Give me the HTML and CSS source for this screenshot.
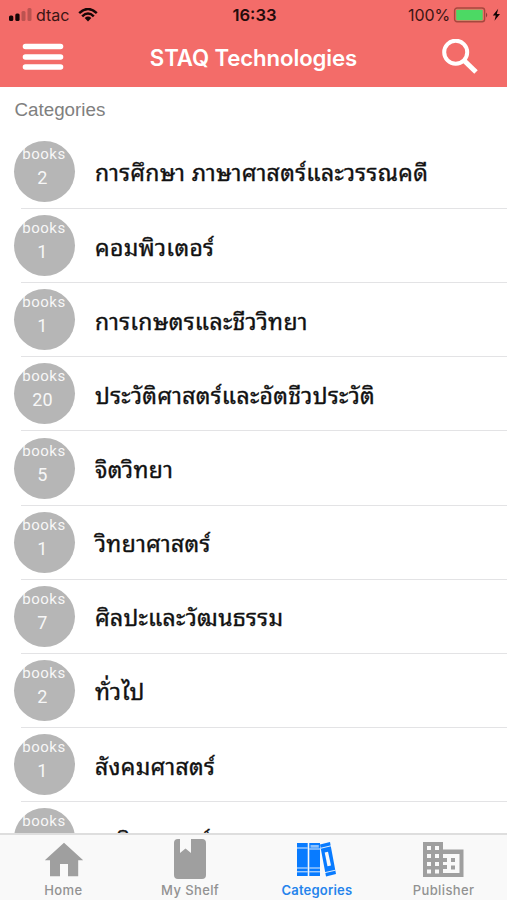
FILE: index.html
```html
<!DOCTYPE html>
<html lang="th">
<head>
<meta charset="utf-8">
<title>STAQ Technologies</title>
<link rel="stylesheet" href="styles.css">
</head>
<body>
<div class="app">
  <header class="header">
    <div class="status">
      <div class="carrier">
        <svg class="signal" width="24" height="14" viewBox="0 0 24 14"><rect x="0" y="7.5" width="4.3" height="5.5" rx="1.5"/><rect x="6.3" y="5.5" width="4.3" height="7.5" rx="1.5"/><rect x="12.5" y="3" width="4" height="10" rx="1.5" opacity=".25"/><rect x="18.5" y="0" width="4" height="13" rx="1.5" opacity=".25"/></svg>
        <span>dtac</span>
        <svg class="wifi" width="20" height="14" viewBox="0 0 20 14"><path d="M1.2 5.1Q10-3 18.8 5.1M4.2 8.3Q10 2.8 15.8 8.3" fill="none" stroke="#170606" stroke-width="2.5"/><path d="M6.7 10Q10 7.2 13.3 10L10 13.4Z"/></svg>
      </div>
      <time class="clock">16:33</time>
      <div class="power">
        <span>100%</span>
        <svg width="47" height="16" viewBox="0 0 47 16"><rect x="1.6" y="1" width="30" height="13.8" rx="2.5" fill="none" stroke="#a5483e" stroke-width="1.4"/><rect x="3.2" y="2.8" width="26.5" height="10.4" rx="1" fill="#4cd964"/><path d="M33 5.5Q35.5 8 33 10.5Z" fill="#8d3e39"/><path d="M45.2 1.8L39.8 8.5H42.8L41.5 13.8L47 7H43.8Z" fill="#120404"/></svg>
      </div>
    </div>
    <nav class="navbar">
      <svg width="42" height="28" viewBox="0 0 42 28"><path d="M3.5 3.5H38.5M3.5 14H38.5M3.5 24H38.5" stroke="#fff" stroke-width="5.6" stroke-linecap="round"/></svg>
      <h1>STAQ Technologies</h1>
      <svg width="36" height="36" viewBox="0 0 36 36"><circle cx="13.7" cy="13.2" r="11.5" fill="none" stroke="#fff" stroke-width="4"/><path d="M22.3 21.8L34 33" stroke="#fff" stroke-width="5"/></svg>
    </nav>
  </header>
  <main class="content">
    <h2>Categories</h2>
    <ul class="list">
      <li><div class="badge"><span>books</span><b>2</b></div><p class="name">การศึกษา ภาษาศาสตร์และวรรณคดี</p></li>
      <li><div class="badge"><span>books</span><b>1</b></div><p class="name">คอมพิวเตอร์</p></li>
      <li><div class="badge"><span>books</span><b>1</b></div><p class="name">การเกษตรและชีววิทยา</p></li>
      <li><div class="badge"><span>books</span><b>20</b></div><p class="name">ประวัติศาสตร์และอัตชีวประวัติ</p></li>
      <li><div class="badge"><span>books</span><b>5</b></div><p class="name">จิตวิทยา</p></li>
      <li><div class="badge"><span>books</span><b>1</b></div><p class="name">วิทยาศาสตร์</p></li>
      <li><div class="badge"><span>books</span><b>7</b></div><p class="name">ศิลปะและวัฒนธรรม</p></li>
      <li><div class="badge"><span>books</span><b>2</b></div><p class="name">ทั่วไป</p></li>
      <li><div class="badge"><span>books</span><b>1</b></div><p class="name">สังคมศาสตร์</p></li>
      <li class="last"><div class="badge"><span>books</span></div><p class="name">คณิตศาสตร์</p></li>
    </ul>
  </main>
  <footer class="tabs">
    <div class="tab home"><svg width="40" height="44" viewBox="0 0 40 44"><path d="M20 8.7L39.2 26.2H34.2V42.3H24V30H16V42.3H6V26.2H.8Z"/></svg><span>Home</span></div>
    <div class="tab"><svg width="40" height="44" viewBox="0 0 40 44"><path d="M8 5H10V19L15.5 14.5L21 19V5H32Q36 5 36 9V41Q36 45 32 45H8Q4 45 4 41V9Q4 5 8 5Z"/></svg><span>My Shelf</span></div>
    <div class="tab active"><svg width="40" height="44" viewBox="0 0 40 44"><path d="M1 9H11.7V42H1ZM13.3 9H24V42H13.3ZM24 10.5L34 8L40 40L30 42.4Z"/><path d="M1 14H11.7M1 34H11.7M1 37.8H11.7M13.3 15H24M13.3 34H24M13.3 37.8H24M25 14.2L35 11.8M29 38.6L39.5 36.2" stroke="#f9f9f9" stroke-width=".9"/><path d="M14.5 11H22.8V13.7H14.5Z" fill="#8fc2fb"/><path d="M28.7 18.5L32 17.7L35 31.5L31.5 32.3Z" fill="#f9f9f9"/></svg><span>Categories</span></div>
    <div class="tab publisher"><svg width="42" height="44" viewBox="0 0 42 44"><path fill-rule="evenodd" d="M1 8H21V15.5H41.5V43H1ZM5 12V16H9V12ZM13 12V16H17V12ZM5 20V24H9V20ZM13 20V24H17V20ZM5 28V32H9V28ZM13 28V32H17V28ZM5 35.5V39.5H9V35.5ZM13 35.5V39.5H17V35.5ZM21 20V24H25V28H21V31H25V35H21V39H37.5V20Z"/><path d="M29 24H33V28H29ZM29 31.5H33V35.5H29Z"/></svg><span>Publisher</span></div>
  </footer>
</div>
</body>
</html>
```
FILE: styles.css
```css
* { box-sizing: border-box; }
body, h1, h2, p, ul { margin: 0; padding: 0; }
body { background: #fff; font-family: Inter, "Liberation Sans", sans-serif; }
svg { display: block; flex: none; }
.app { height: 900px; display: flex; flex-direction: column; overflow: hidden; }
.header { height: 87px; flex: none; background: #f36c69; }
.status { height: 30px; display: grid; grid-template-columns: 1fr auto 1fr; padding: 0 7px 0 9px; font-size: 16px; line-height: 30px; color: #3b1514; }
.carrier, .power { display: flex; align-items: center; }
.carrier svg { fill: #170606; }
.carrier span { margin-left: 3px; letter-spacing: 0; }
.wifi { margin-left: 9px; }
.clock { font-weight: 600; color: #240b0b; font-size: 16.6px; }
.power { justify-content: flex-end; gap: 3px; }
.power span { font-size: 16px; letter-spacing: -.1px; }
.navbar { height: 57px; display: grid; grid-template-columns: 42px 1fr 36px; align-items: center; padding: 0 29px 3px 22px; color: #fff; }
.navbar h1 { text-align: center; font-size: 22.2px; font-weight: 600; letter-spacing: -.1px; padding: 1px 0 0 1px; }
.content { height: 746px; flex: none; overflow: hidden; }
.content h2 { height: 47.8px; padding-left: 14.5px; font: 400 18.8px/46px "Liberation Sans", sans-serif; color: #808080; }
.list { list-style: none; }
.list li { height: 74.17px; display: flex; align-items: center; margin-left: 21px; border-bottom: 1.2px solid #e3e3e5; }
.badge { width: 61px; height: 61px; flex: none; margin-left: -7px; border-radius: 50%; background: #b6b6b6; color: #fff; text-align: center; font: 400 15px/24px Roboto, sans-serif; letter-spacing: .5px; display: flex; flex-direction: column; align-items: center; }
.badge span { height: 24px; line-height: 27px; opacity: .9; margin-right: 1px; }
.badge b { font-weight: 400; font-size: 18px; line-height: 26px; margin-right: 4px; letter-spacing: .2px; opacity: .9; }
.name { margin-left: 20px; font: 400 23px/40px "Noto Sans Thai Looped", "Noto Looped Thai", Loma, Garuda, Waree, "Noto Sans Thai", "Noto Sans", sans-serif; letter-spacing: .3px; color: #111; -webkit-text-stroke: .35px #111; white-space: nowrap; }
.last .name { padding-top: 1px; }
.tabs { height: 67px; flex: none; border-top: 2px solid #dedede; background: #f9f9f9; display: grid; grid-template-columns: repeat(4, 1fr); color: #929292; }
.tab { display: flex; flex-direction: column; align-items: center; font-size: 13px; font-weight: 500; line-height: 18px; letter-spacing: .4px; }
.tab svg { fill: #9f9f9f; overflow: visible; margin-top: -1px; }
.home svg { margin-left: 1px; }
.active svg, .publisher svg { margin-right: 2px; }
.tab span { margin-top: 3px; }
.tab.active { color: #2584ec; font-weight: 600; letter-spacing: .2px; }
.tab.active svg { fill: #087bff; }
```
